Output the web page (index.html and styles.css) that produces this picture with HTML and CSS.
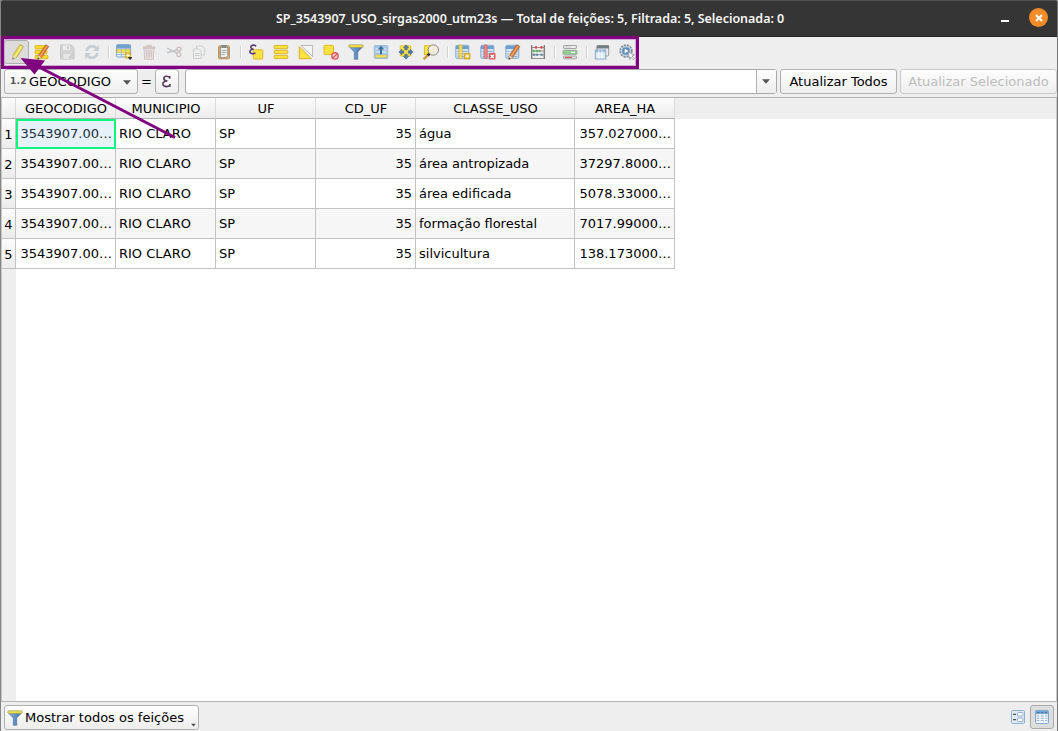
FILE: index.html
```html
<!DOCTYPE html>
<html lang="pt-BR">
<head>
<meta charset="utf-8">
<title>Tabela de atributos</title>
<link rel="stylesheet" href="styles.css">
</head>
<body>
<svg class="defs" width="0" height="0">
  <defs>
    <linearGradient id="funnelFill" x1="0" x2="1" y1="0" y2="0"><stop offset="0" stop-color="#89b0db"/><stop offset="1" stop-color="#416fa5"/></linearGradient>
    <symbol id="funnel" viewBox="0 0 16 16"><path d="M1 2.5L6.3 8v7.3h3.4V8L15 2.500z" fill="url(#funnelFill)" stroke="#416b9b" stroke-width=".6"/><rect x=".8" y=".8" width="14.4" height="2.6" rx="1" fill="#f5e34c" stroke="#8a8d5d" stroke-width=".6"/></symbol>
    <symbol id="table" viewBox="0 0 16 16"><rect x=".8" y="1.3" width="13" height="13" rx="1" fill="#d0e1f0" stroke="#83a9ce"/><path d="M1 2h12.6v3H1z" fill="#6da0cf"/><path d="M2.500 7.500h10M2.500 10h10M2.500 12.500h10" stroke="#8fb3d5"/><path d="M5 5v9" stroke="#fff" stroke-width=".8"/></symbol>
    <symbol id="pencil" viewBox="0 0 16 16"><path d="M11.8.8l3 1.7-7.2 11-3.900 2 .8-4.200z" fill="#e87c37" stroke="#8d6037" stroke-width=".6"/><path d="M13 2L5.800 12.700" stroke="#f9b06b"/><path d="M4.500 11.300l-.8 4.200 3.400-1.800z" fill="#e8dfbd"/><path d="M4.200 13.500l-.5 2 1.700-.9z" fill="#333"/></symbol>
    <symbol id="down" viewBox="0 0 8 5"><path d="M0 .3h8L4 4.700z" fill="#555"/></symbol>
  </defs>
</svg>
<div class="window">
  <header class="titlebar">
    <h1 class="title">SP_3543907_USO_sirgas2000_utm23s — Total de feições: 5, Filtrada: 5, Selecionada: 0</h1>
    <div class="controls">
      <span class="minimize"></span>
      <span class="close"><svg width="8" height="8" viewBox="0 0 8 8"><path d="M1 1l6 6M7 1L1 7" stroke="#fff" stroke-width="2.2"/></svg></span>
    </div>
  </header>

  <nav class="toolbar">
    <span class="tool pressed"><svg class="icon" viewBox="0 0 16 16"><path d="M11 .6l3.400 1.900-6.700 10.800-4.200 2.100.7-4.600z" fill="#ead94d" stroke="#a99c4e" stroke-width=".7"/><path d="M12.500 2.200L6 12.500" stroke="#fff493" stroke-width="1.2"/><path d="M4.300 11.300l-.8 4 3.500-1.800z" fill="#e4e0d1"/><path d="M4 13.600l-.5 1.700 1.700-.9z" fill="#666"/></svg></span>
    <span class="tool"><svg class="icon" viewBox="0 0 16 16"><g fill="#f9d928" stroke="#d2aa17" stroke-width=".7"><rect x="1" y="1.500" width="12" height="3.500" rx="1"/><rect x="1" y="6.300" width="12" height="3.500" rx="1"/><rect x="1" y="11.300" width="13" height="3.500" rx="1"/></g><use href="#pencil"/></svg></span>
    <span class="tool"><svg class="icon faint" viewBox="0 0 16 16"><path d="M1.500 1h10.700L15 3.800V15H1.500z" fill="#aaa" stroke="#888"/><path d="M4 1.500h7v4.500H4z" fill="#eee"/><path d="M4 9.500h8V15H4z" fill="#ddd" stroke="#999" stroke-width=".6"/><path d="M8 2.300h2v3H8z" fill="#999"/><path d="M10 14l5-5" stroke="#999" stroke-width="2"/></svg></span>
    <span class="tool"><svg class="icon dim" viewBox="0 0 16 16"><path d="M2.500 7A5.700 5.700 0 0 1 12 3.800M13.500 9A5.700 5.700 0 0 1 4 12.200" fill="none" stroke="#98a4ac" stroke-width="2.600"/><path d="M14.800 1v6H9zM1.200 15V9H7z" fill="#98a4ac"/></svg></span>
    <span class="separator"></span>
    <span class="tool add"><svg class="icon" viewBox="0 0 16 16"><rect x=".6" y=".6" width="14" height="12.400" rx="1" fill="#e9f0f7" stroke="#79a4cc"/><path d="M1 1h13.300v3.600H1z" fill="#6f9fca"/><path d="M1 5.500h13v3H1z" fill="#f6df53" stroke="#ceb532" stroke-width=".5"/><path d="M5.400 4.500v8M9.800 4.500v8M1 10.500h9" stroke="#91afcb" stroke-width=".8"/><rect x="9" y="8.500" width="6" height="6" rx="1" fill="#d2ac22"/><path d="M12 9.300v4.400M9.800 11.500h4.400" stroke="#fff8c6" stroke-width="1.300"/><path d="M12.200 13h3.800v1l-1.800 2-2-2z" fill="#333"/></svg></span>
    <span class="tool"><svg class="icon dim" viewBox="0 0 16 16"><path d="M3 4.500h10l-.7 10.700H3.700z" fill="#ddcccc" stroke="#a99292"/><path d="M5.800 6.300v7M8 6.300v7M10.200 6.300v7" stroke="#9c8585"/><path d="M2 2.700h12v2H2zM5.500 1.300h5v1.500h-5z" fill="#b99e9e" stroke="#a99292" stroke-width=".5"/></svg></span>
    <span class="tool"><svg class="icon dim" viewBox="0 0 16 16"><path d="M1 4.200l10.500 5.300M1 8.700L12 5.500" stroke="#92999d" stroke-width="1.500"/><circle cx="13" cy="5.200" r="2" fill="none" stroke="#a48c90" stroke-width="1.400"/><circle cx="12.800" cy="10.600" r="2" fill="none" stroke="#a48c90" stroke-width="1.400"/></svg></span>
    <span class="tool"><svg class="icon faint" viewBox="0 0 16 16"><g fill="#eee" stroke="#929b9f"><path d="M5.500 2h6l2.300 2.300V11H5.500z"/><path d="M2.500 5h5.300l2.400 2.400v7.100H2.500z"/></g><path d="M4 9.500h4.500M4 11.500h4.500" stroke="#999"/></svg></span>
    <span class="tool"><svg class="icon" viewBox="0 0 16 16"><rect x="2.500" y="1.800" width="11" height="13" rx="1" fill="#d6ae79" stroke="#c0955e"/><path d="M4.300 3h7.500v8.700l-2 2H4.300z" fill="#eef0ed" stroke="#777a78" stroke-width=".8"/><rect x="5.500" y="1" width="5" height="3" rx=".8" fill="#828984"/><path d="M5.700 6.500h4.700M5.700 8.500h4.700M5.700 10.500h3" stroke="#929893" stroke-width=".8"/></svg></span>
    <span class="separator"></span>
    <span class="tool"><svg class="icon" viewBox="0 0 16 16"><rect x="5.300" y="5.700" width="9.500" height="9.300" rx="1" fill="#fce143" stroke="#d4ad18" stroke-width=".8"/><path d="M8.100 2.200Q6.500.7 4.400 1.300C2 2 2.300 4.900 5.600 5.200 1.800 5.200.9 8 3 9.300q2.300 1.100 4.500-.4" fill="none" stroke="#593b6e" stroke-width="1.600"/></svg></span>
    <span class="tool"><svg class="icon" viewBox="0 0 16 16"><g fill="#fbe13c" stroke="#d0aa21" stroke-width=".8"><rect x="1.200" y="1.400" width="13.500" height="3.300" rx=".7"/><rect x="1.200" y="6.300" width="13.500" height="3.300" rx=".7"/><rect x="1.200" y="11.300" width="13.500" height="3.300" rx=".7"/></g></svg></span>
    <span class="tool"><svg class="icon" viewBox="0 0 16 16"><path d="M3 1.500h11.600v11z" fill="#f4f4f4" stroke="#aaa" stroke-width=".8"/><path d="M1.300 2.700v12h12z" fill="#ffe23e" stroke="#d3ac21" stroke-width=".9"/></svg></span>
    <span class="tool"><svg class="icon" viewBox="0 0 16 16"><rect x="1" y="1.300" width="9.500" height="9.300" rx="1" fill="#fce143" stroke="#d4ad18" stroke-width=".8"/><circle cx="12" cy="11.900" r="3.200" fill="#f8caca" stroke="#d75253" stroke-width="1.300"/><path d="M10 13.900l4-4" stroke="#d75253" stroke-width="1.300"/></svg></span>
    <span class="tool"><svg class="icon"><use href="#funnel"/></svg></span>
    <span class="tool"><svg class="icon" viewBox="0 0 16 16"><rect x="1.300" y="1.500" width="13.500" height="13" rx="1" fill="#a6c5e2" stroke="#9bbbd9"/><path d="M2.500 5h11M2.500 8h11" stroke="#e5eef7"/><path d="M2.500 11h11v2.500h-11z" fill="#f5df5f" stroke="#c8b445" stroke-width=".5"/><path d="M8 1.700l3.300 3.800H9v4.700H7V5.500H4.700z" fill="#3e6c9c"/></svg></span>
    <span class="tool"><svg class="icon" viewBox="0 0 16 16"><rect x="2.300" y="1.700" width="10.500" height="10.500" rx="1" fill="#fce143" stroke="#d4ad18" stroke-width=".7"/><path d="M8 .8l2.700 3H9.200v2H6.800v-2H5.300zM8 15.200l2.700-3H9.200v-2H6.800v2H5.300zM.8 8l3-2.700v1.500h2v2.400h-2v1.500zM15.200 8l-3-2.700v1.500h-2v2.400h2v1.500z" fill="#517da9" stroke="#34618e" stroke-width=".5"/></svg></span>
    <span class="tool"><svg class="icon" viewBox="0 0 16 16"><rect x="1.300" y="1.700" width="8" height="9" fill="#fce143" stroke="#d4ad18" stroke-width=".7"/><path d="M6 10.200l-5.300 5" stroke="#c99a3f" stroke-width="2.300"/><path d="M6.500 9.700L4.800 11.500" stroke="#333" stroke-width="2.600"/><circle cx="10.300" cy="6" r="5.200" fill="#efeddd" fill-opacity=".93" stroke="#888" stroke-width="1"/><path d="M7 5.200q.5-2 2.700-2.300" stroke="#fff" fill="none"/></svg></span>
    <span class="separator"></span>
    <span class="tool"><svg class="icon" viewBox="0 0 16 16"><use href="#table"/><rect x="4" y=".8" width="3.200" height="13.800" rx=".8" fill="#f4dc68" stroke="#c9aa3b" stroke-width=".7"/><rect x="9" y="9" width="6.500" height="6.500" rx="1" fill="#d1aa25"/><path d="M12.200 10v4.500M10 12.200h4.500M10.700 10.700l3 3M13.700 10.700l-3 3" stroke="#fffbd3" stroke-width=".9"/></svg></span>
    <span class="tool"><svg class="icon" viewBox="0 0 16 16"><use href="#table"/><rect x="4" y=".8" width="3.200" height="13.800" rx=".8" fill="#ec8584" stroke="#cd6767" stroke-width=".7"/><rect x="9" y="9" width="6.500" height="6.500" rx="1" fill="#dc5757"/><path d="M10.700 10.700l3.200 3.200M13.900 10.700l-3.200 3.200" stroke="#fff" stroke-width="1.400"/></svg></span>
    <span class="tool"><svg class="icon"><use href="#table"/><use href="#pencil"/></svg></span>
    <span class="tool"><svg class="icon" viewBox="0 0 16 16"><path d="M1.700 1v14M14.300 1v14" stroke="#777" stroke-width="1.300"/><path d="M1 3.500h14M1 7h14M1 10.700h14M.8 14.500h14.400" stroke="#888" stroke-width=".9"/><g fill="#d84d4d"><circle cx="6" cy="3.400" r="1.300"/><circle cx="11.500" cy="3.400" r="1.300"/></g><g fill="#6dae6b"><circle cx="4" cy="7" r="1.300"/><circle cx="6.800" cy="7" r="1.300"/><circle cx="9.600" cy="7" r="1.300"/></g><g fill="#668eab"><circle cx="4" cy="10.700" r="1.300"/><circle cx="7" cy="10.700" r="1.300"/><circle cx="11.700" cy="10.700" r="1.300"/></g></svg></span>
    <span class="separator"></span>
    <span class="tool"><svg class="icon" viewBox="0 0 16 16"><g stroke="#929592" stroke-width=".8"><rect x="1.500" y="1.500" width="13" height="3" rx=".8" fill="#ddd"/><rect x="1" y="6.300" width="14" height="4" rx=".8" fill="#8ed28d"/><rect x="1.500" y="12" width="13" height="2.800" rx=".8" fill="#ddd"/></g><path d="M3 13.400h7" stroke="#d85f5d" stroke-width="1.200"/><path d="M9 3h4M9 8.300h4" stroke="#fff" stroke-width="1.200"/></svg></span>
    <span class="separator"></span>
    <span class="tool"><svg class="icon" viewBox="0 0 16 16"><rect x="3" y="1.500" width="11.700" height="10.500" rx="1" fill="#eee" stroke="#999"/><path d="M2.700 1.500h12.200v3H2.700z" fill="#777e82"/><rect x="1.300" y="6" width="10.500" height="9" fill="#dceaf6" stroke="#86a8c8"/><path d="M1.500 6h10v2.300h-10z" fill="#91b5d8"/><path d="M4.800 6.500v8M8 6.500v8" stroke="#fff"/></svg></span>
    <span class="tool"><svg class="icon" viewBox="0 0 16 16"><circle cx="7" cy="7" r="5.900" fill="#dae5ef" stroke="#8d959a" stroke-width="1.700" stroke-dasharray="2.300 .8"/><circle cx="7" cy="7" r="4.100" fill="#5d8fbd" stroke="#a2bdd8"/><path d="M5.700 4.700L9.500 7l-3.800 2.300z" fill="#fff"/><path d="M9 8l6.500 3-2.500 1 2.300 2.500-1.200 1.100-2.300-2.400-1 2.300z" fill="#f7f7f7" stroke="#888" stroke-width=".7"/></svg></span>
  </nav>

  <section class="updatebar">
    <div class="button fieldselect"><span class="type">1.2</span><span>GEOCODIGO</span><svg class="arrow"><use href="#down"/></svg></div>
    <span class="equals">=</span>
    <div class="button expression"><svg width="11" height="13" viewBox="0 0 11 13"><path d="M9 2.600Q7 1 5 1.300C1.800 1.800 2.100 5.800 6.400 6 1.800 6 .8 9.400 3.200 11.100q2.800 1.300 5.800-.7M8.700 1v2.800M8.900 9v2.800" fill="none" stroke="#55395f" stroke-width="1.600"/></svg></div>
    <div class="value"><span class="valuebox"></span><span class="drop"><svg class="arrow"><use href="#down"/></svg></span></div>
    <div class="button all">Atualizar Todos</div>
    <div class="button selected">Atualizar Selecionado</div>
  </section>

  <main class="view">
    <table class="grid">
      <colgroup><col class="c-index"><col class="c-std"><col class="c-std"><col class="c-std"><col class="c-std"><col class="c-class"><col class="c-std"></colgroup>
      <thead><tr><th></th><th>GEOCODIGO</th><th>MUNICIPIO</th><th>UF</th><th>CD_UF</th><th>CLASSE_USO</th><th>AREA_HA</th></tr></thead>
      <tbody>
        <tr><th>1</th><td class="num current">3543907.00…</td><td>RIO CLARO</td><td>SP</td><td class="num">35</td><td>água</td><td class="num">357.027000…</td></tr>
        <tr><th>2</th><td class="num">3543907.00…</td><td>RIO CLARO</td><td>SP</td><td class="num">35</td><td>área antropizada</td><td class="num">37297.8000…</td></tr>
        <tr><th>3</th><td class="num">3543907.00…</td><td>RIO CLARO</td><td>SP</td><td class="num">35</td><td>área edificada</td><td class="num">5078.33000…</td></tr>
        <tr><th>4</th><td class="num">3543907.00…</td><td>RIO CLARO</td><td>SP</td><td class="num">35</td><td>formação florestal</td><td class="num">7017.99000…</td></tr>
        <tr><th>5</th><td class="num">3543907.00…</td><td>RIO CLARO</td><td>SP</td><td class="num">35</td><td>silvicultura</td><td class="num">138.173000…</td></tr>
      </tbody>
    </table>
  </main>

  <footer class="statusbar">
    <div class="button filter"><svg class="icon"><use href="#funnel"/></svg><span>Mostrar todos os feições</span><svg class="tiny"><use href="#down"/></svg></div>
    <div class="modes">
      <span class="mode"><svg width="14" height="14" viewBox="0 0 14 14"><rect x=".5" y=".5" width="13" height="13" rx="1" fill="#e1eaf3" stroke="#91b1d2"/><path d="M2 4.300h3M2 9.700h3" stroke="#555" stroke-width="1.200"/><g fill="#fff" stroke="#91afcf"><rect x="6.500" y="2.500" width="5.500" height="3.500" rx="1"/><rect x="6.500" y="8" width="5.500" height="3.500" rx="1"/></g></svg></span>
      <span class="mode on"><svg width="14" height="14" viewBox="0 0 14 14"><rect x=".5" y=".5" width="13" height="13" rx="1" fill="#eef4fa" stroke="#82a9d1"/><path d="M.5.5h13v3.700H.5z" fill="#75a6d5"/><path d="M2 2.500h2.500M6 2.500h2.500M10 2.500h2" stroke="#4c769f"/><path d="M1.500 6h11M1.500 8.300h11M1.500 10.600h11" stroke="#9bb8d5"/><path d="M5 4v9.300M9.500 4v9.300" stroke="#fff"/></svg></span>
    </div>
  </footer>

  <div class="highlight"></div>
  <svg class="pointer" width="200" height="150" viewBox="0 0 200 150"><path d="M175 137.500L37 66" stroke="#800080" stroke-width="3"/><path d="M20.500 58L45 60.500 34.500 74.500z" fill="#800080"/></svg>
</div>
</body>
</html>
```
FILE: styles.css
```css
* { box-sizing: border-box; }
body { margin: 0; background: #eee; color: #000; font: 13px/16px "DejaVu Sans", sans-serif; }
.defs { position: absolute; }
.window { position: relative; width: 1058px; height: 731px; display: flex; flex-direction: column; overflow: hidden; background: #eee; border-left: 1px solid #858585; border-right: 1px solid #777; }
.titlebar { height: 37px; flex: none; display: flex; align-items: center; justify-content: center; margin: 0 -1px; background: #353535; border-top: 1px solid #505050; border-bottom: 1px solid #222; border-radius: 3px 3px 0 0; position: relative; }
.title { margin: 0; font: 600 12.5px/18px "Noto Sans", sans-serif; letter-spacing: -.024px; color: #f5f5f5; white-space: nowrap; width: 506px; }
.controls { position: absolute; right: 10px; top: 7px; display: flex; gap: 20px; }
.minimize { width: 8px; height: 2px; margin-top: 12px; background: #fff; }
.close { width: 19px; height: 19px; border-radius: 50%; background: #f38b26; display: flex; align-items: center; justify-content: center; }
.toolbar { height: 32px; flex: none; display: flex; align-items: center; padding: 0 0 2px 3px; }
.tool { width: 25px; height: 24px; display: flex; align-items: center; justify-content: center; }
.pressed { background: #dcdcdc; border: 1px solid #aeaeae; border-radius: 3px; }
.add { padding-left: 1px; }
.icon { width: 16px; height: 16px; flex: none; }
.dim { opacity: .45; }
.faint { opacity: .38; }
.separator { width: 7px; height: 12px; background: linear-gradient(90deg, transparent 4px, #d2d2d2 4px, #d2d2d2 5px, #fff 5px, #fff 6px, transparent 6px); }
.updatebar { height: 28px; flex: none; display: flex; align-items: flex-start; padding-left: 3px; white-space: nowrap; }
.button { height: 25px; display: flex; align-items: center; justify-content: center; border: 1px solid #b0b0b0; border-radius: 3px; background: linear-gradient(#fdfdfd, #eee); }
.fieldselect { width: 134px; justify-content: flex-start; padding-left: 5px; padding-top: 1px; }
.type { font: bold 9px/12px "DejaVu Sans", sans-serif; color: #555; width: 19px; margin-top: -2px; letter-spacing: .3px; }
.arrow { width: 8px; height: 5px; }
.fieldselect .arrow { margin-left: auto; margin-right: 6px; }
.equals { width: 17px; text-align: center; line-height: 26px; }
.expression { width: 24px; padding-right: 1px; }
.value { width: 592px; height: 25px; margin-left: 6px; display: flex; border: 1px solid #aaa; border-radius: 3px; background: #fff; }
.valuebox { flex: 1; }
.drop { width: 20px; border-left: 1px solid #b0b0b0; background: linear-gradient(#fdfdfd, #eee); display: flex; align-items: center; justify-content: center; padding-right: 2px; }
.all { width: 117px; margin-left: 3px; }
.selected { width: 157px; margin-left: 3px; color: #bdbdbd; border-color: #cacaca; }
.view { flex: none; height: 605px; border-top: 1px solid #b4b4b4; border-bottom: 1px solid #b4b4b4; border-left: 1px solid #c8c8c8; border-right: 1px solid #c8c8c8; background: linear-gradient(#eee, #eee) 0 0 / 100% 21px no-repeat, linear-gradient(90deg, #eee 14px, #fff 14px); }
.grid { width: 673px; table-layout: fixed; border-collapse: separate; border-spacing: 0; }
.c-index { width: 14px; }
.c-std { width: 100px; }
.c-class { width: 159px; }
.grid th, .grid td { padding: 0 3px; font-weight: normal; white-space: nowrap; text-align: left; border-right: 1px solid #c3c3c3; border-bottom: 1px solid #c3c3c3; }
.grid td { height: 30px; background: #fff; }
.grid thead th { height: 21px; padding: 1px 0 0 1px; text-align: center; background: linear-gradient(#fcfcfc, #ececec); border-right-color: #dadada; border-bottom-color: #b0b0b0; }
.grid tbody th { padding: 2px 0 0; text-align: center; background: linear-gradient(#fcfcfc, #ececec); }
.grid tbody tr:nth-child(even) td { background: #f6f6f6; }
.grid .num { text-align: right; }
.grid td.current { background: #e6f1fa; color: #203040; box-shadow: inset 1px 1px 0 1px #0cf57c, inset -1px -1px 0 0 #0cf57c; border-color: #0cf57c; }
.statusbar { flex: 1; display: flex; justify-content: space-between; padding: 3px 3px 0; }
.filter { width: 195px; justify-content: flex-start; padding-left: 2px; white-space: nowrap; }
.filter span { margin-left: 2px; }
.tiny { width: 5px; height: 4px; margin-left: auto; margin-right: 2px; align-self: flex-end; margin-bottom: 2px; }
.modes { display: flex; }
.mode { width: 24px; height: 24px; display: flex; align-items: center; justify-content: center; }
.on { border: 1px solid #aaa; border-radius: 3px; background: #ddd; }
.highlight { position: absolute; left: 0; top: 36px; width: 638px; height: 33px; border: 3px solid #800080; box-shadow: inset 0 0 0 1px #d4a8d4; }
.pointer { position: absolute; left: -1px; top: 0; }
```
